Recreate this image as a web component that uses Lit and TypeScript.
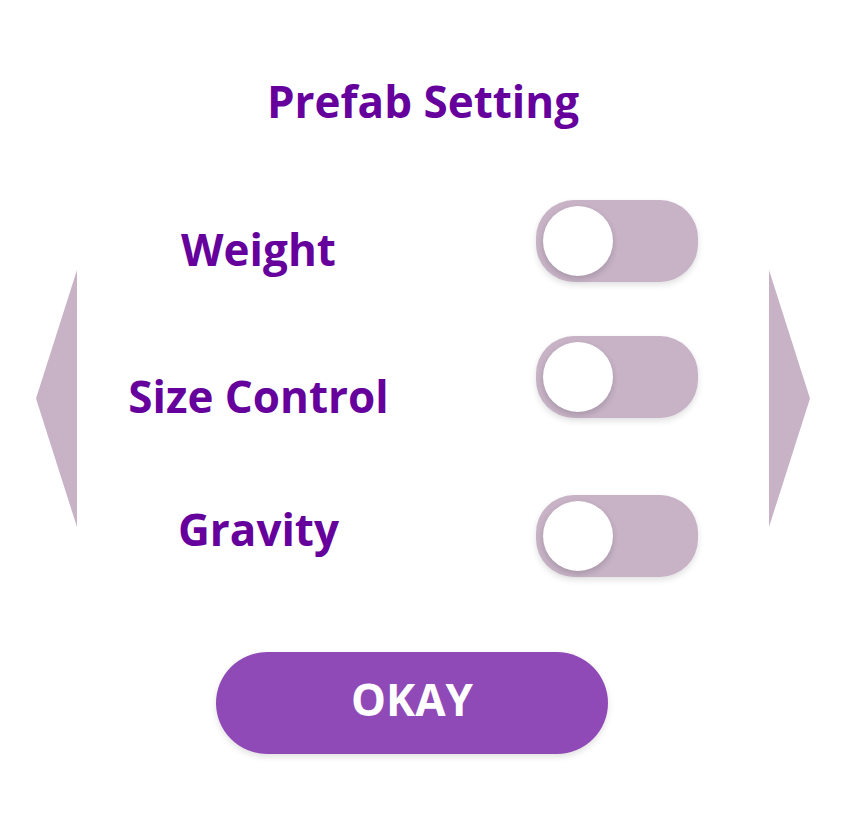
import { LitElement, html, css } from "lit";
import { customElement } from "lit/decorators.js";

@customElement("app-root")
export class AppRoot extends LitElement {
  static styles = css`
    :host {
      display: block;
      background: #fff;
      color: #66009d;
      font: 700 44px/60px "Open Sans", "Noto Sans", sans-serif;
    }
    .panel {
      display: grid;
      grid-template-columns: 41px minmax(0, 1fr) 41px;
      padding: 71px 36px;
    }
    .title {
      grid-column: 1 / -1;
      margin: 0;
      font: inherit;
      text-align: center;
    }
    button {
      border: 0;
      padding: 0;
      font: inherit;
      cursor: pointer;
    }
    .arrow {
      align-self: start;
      height: 257px;
      margin-top: 139px;
      background: #c7b2c6;
    }
    .prev { clip-path: polygon(100% 0, 100% 100%, 0 50%); }
    .next { clip-path: polygon(0 0, 100% 50%, 0 100%); }
    .body { padding-top: 69px; }
    .settings {
      display: grid;
      grid-template-columns: minmax(0, 1fr) 162px;
      column-gap: 96px;
      padding-right: 71px;
    }
    .row {
      display: grid;
      grid-template-columns: subgrid;
      grid-column: 1 / -1;
      align-items: start;
    }
    .row label { text-align: center; }
    .weight { padding-bottom: 54px; }
    .weight label { margin-top: 19px; }
    .size { padding-bottom: 69px; }
    .size label { margin-top: 30px; }
    .gravity { padding-bottom: 75px; }
    .gravity label { margin-top: 4px; }
    .switch {
      appearance: none;
      box-sizing: border-box;
      width: 162px;
      height: 82px;
      margin: 0;
      padding: 6px 7px;
      border-radius: 38px;
      background: #c7b2c6;
      box-shadow: 0 3px 6px #0000001f;
      cursor: pointer;
    }
    .switch::before {
      content: "";
      display: block;
      width: 70px;
      height: 70px;
      border-radius: 50%;
      background: #fff;
      box-shadow: 0 3px 6px #00000029;
    }
    .switch:checked { background: #904ab7; }
    .switch:checked::before { margin-left: auto; }
    .actions {
      display: flex;
      justify-content: center;
      padding-right: 22px;
    }
    .okay {
      width: 392px;
      height: 102px;
      padding-bottom: 8px;
      border-radius: 51px;
      background: #904ab7;
      color: #fff;
      box-shadow: 0 3px 6px #0000001f;
    }
  `;

  private row(id: string, text: string) {
    return html`<div class="row ${id}">
      <label for=${id}>${text}</label>
      <input class="switch" type="checkbox" role="switch" id=${id} />
    </div>`;
  }

  render() {
    return html`<main class="panel">
      <h1 class="title">Prefab Setting</h1>
      <button class="arrow prev" aria-label="Previous"></button>
      <div class="body">
        <div class="settings">
          ${this.row("weight", "Weight")}
          ${this.row("size", "Size Control")}
          ${this.row("gravity", "Gravity")}
        </div>
        <div class="actions"><button class="okay">OKAY</button></div>
      </div>
      <button class="arrow next" aria-label="Next"></button>
    </main>`;
  }
}
